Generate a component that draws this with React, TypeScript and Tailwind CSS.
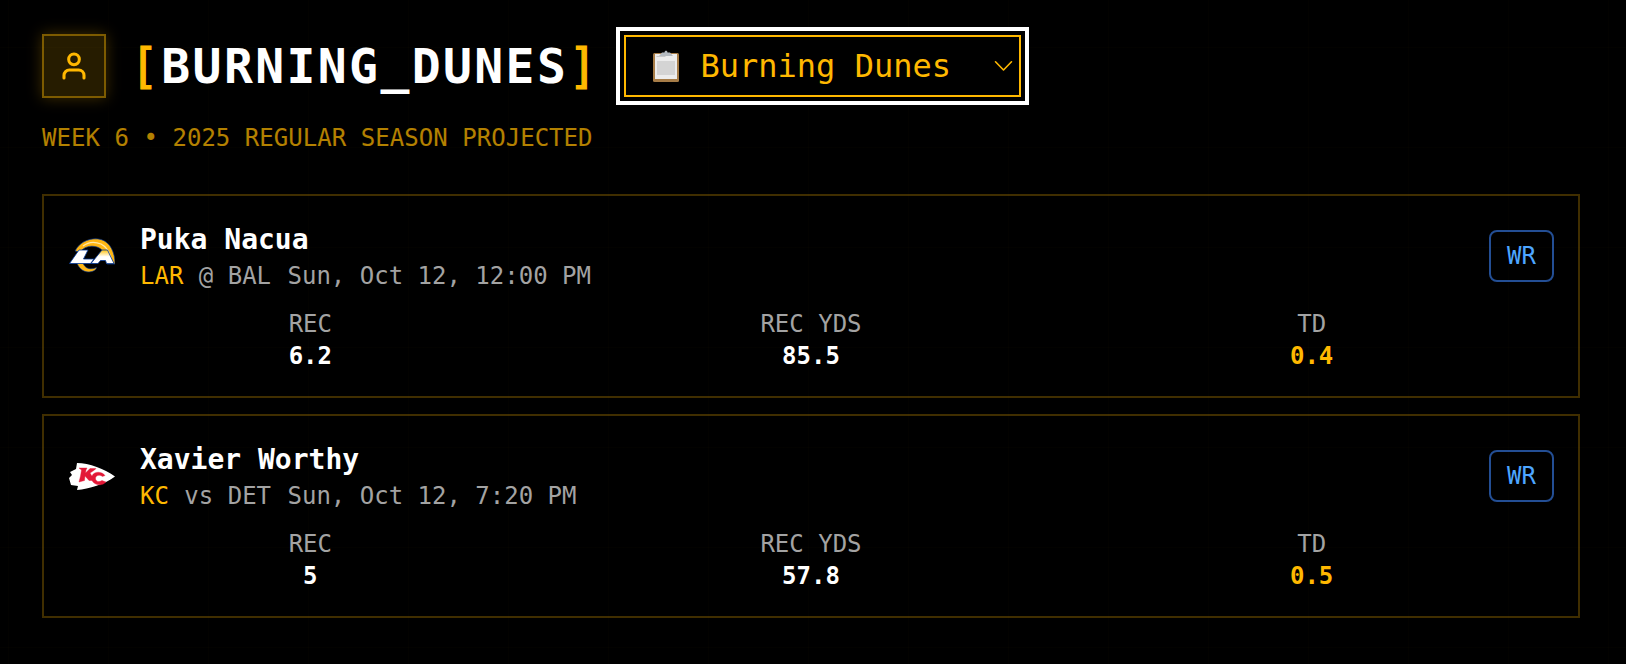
import React from "react";

function RamsLogo() {
  return (
    <svg width="46" height="35" viewBox="0 0 46 35" className="block">
      <defs>
        <linearGradient id="ramA" x1="0" y1="0" x2="0" y2="1">
          <stop offset="0" stopColor="#ffc20e" />
          <stop offset="0.5" stopColor="#ffffff" />
        </linearGradient>
      </defs>
      <path d="M6 13 C11 3 23 -1 32 1.500 C41 4 46 14 46 26 L38 26 C38 17 34 11 28 9 C21 7 15 9 11 14 Z" fill="#ffb612" stroke="#003594" strokeWidth="0.7" />
      <path d="M14 8 C19 4 26 3.500 32 6 C38 9 41 15 42.500 22" fill="none" stroke="#ffe9a8" strokeWidth="1.3" />
      <path d="M8 25 C10 31 16 35.500 23 33.500 C26 32.500 27.500 31 27.500 29.500 C22 32 16 31 14 25 Z" fill="#ffb612" stroke="#003594" strokeWidth="0.6" />
      <path d="M10 12 L19 12 L14.500 21 L25 21 L21.500 25.500 L0.500 25.500 Z" fill="#ffffff" stroke="#003594" strokeWidth="0.8" />
      <path d="M22 25.500 L33 12 L38.500 12 L45 25.500 L37.500 25.500 L36.500 22.500 L31.500 22.500 L29 25.500 Z" fill="url(#ramA)" stroke="#003594" strokeWidth="0.8" />
    </svg>
  );
}

function ChiefsLogo() {
  return (
    <svg width="46" height="27" viewBox="0 0 46 27" className="block">
      <path d="M8 0 C20 0 36 6 46 13.500 C36 21 20 26 8 27 L9 23 L2 22 L0 15 L3 12 L1 9 L7 6 Z" fill="#ffffff" />
      <path d="M10 5 L18 5 L17 7 L16.500 10 L21 5.500 L27 5.500 L25.500 7 L21 10 L24 15 L26 17.500 L20 17.500 L16 13 L15.500 17.500 L10 19 L11.500 13 L12.500 7 Z" fill="#e31837" stroke="#e31837" strokeWidth="0.4" />
      <path d="M36 12.500 C33 8.500 26 8 23.500 12 C21 16 24 22 31 21.800 C33.500 21.600 35.500 20.500 37 19 L33 17.500 C30 19.500 27 18.500 26.500 16 C26 13 30 10.800 33.500 13.500 Z" fill="#e31837" stroke="#e31837" strokeWidth="0.4" />
    </svg>
  );
}

function Clipboard() {
  return (
    <svg width="26" height="32" viewBox="0 0 26 32" className="block">
      <rect x="0" y="3" width="26" height="29" rx="1.500" fill="#a67c47" />
      <rect x="2" y="4" width="22" height="25" fill="#ececec" />
      <rect x="4" y="11" width="18" height="14" fill="#d4d4d4" />
      <rect x="3.500" y="6" width="9" height="1" fill="#c8c8c8" />
      <path d="M6 6 L9 2.500 L11.500 2.500 C11.500 0 14.500 0 14.500 2.500 L17 2.500 L20 6 Z" fill="#b4bac0" />
    </svg>
  );
}

type P = { name: string; team: string; opp: string; time: string; rec: string; yds: string; td: string; logo: React.ReactNode; logoClass: string };

const players: P[] = [
  { name: "Puka Nacua", team: "LAR", opp: "@ BAL", time: "Sun, Oct 12, 12:00 PM", rec: "6.2", yds: "85.5", td: "0.4", logo: <RamsLogo />, logoClass: "mb-[6px]" },
  { name: "Xavier Worthy", team: "KC", opp: "vs DET", time: "Sun, Oct 12, 7:20 PM", rec: "5", yds: "57.8", td: "0.5", logo: <ChiefsLogo />, logoClass: "mb-[4px]" },
];

function Stat({ label, value, gold }: { label: string; value: string; gold?: boolean }) {
  return (
    <div className="text-center">
      <div className="text-[24px] leading-[32px] text-[#a3a3a3]">{label}</div>
      <div className={`text-[24px] leading-[32px] font-bold ${gold ? "text-[#ffb800]" : "text-white"}`}>{value}</div>
    </div>
  );
}

export default function App() {
  return (
    <div className="min-h-[664px] bg-black bg-[linear-gradient(rgba(255,184,0,0.012)_1px,transparent_1px),linear-gradient(90deg,rgba(255,184,0,0.012)_1px,transparent_1px)] bg-[size:100px_100px] bg-[position:8px_47px] pl-[42px] pr-[46px] pt-[27px] font-['DejaVu_Sans_Mono',monospace]">
      <div className="flex items-center">
        <div className="flex h-[64px] w-[64px] items-center justify-center border-2 border-[#ffb800]/40 bg-[#ffb800]/15 shadow-[0_0_14px_rgba(255,184,0,0.25)]">
          <svg width="32" height="32" viewBox="0 0 24 24" fill="none" stroke="#ffb800" strokeWidth="2.3" strokeLinecap="round" strokeLinejoin="round">
            <path d="M4.500 21v-2a4 4 0 0 1 4-4h7a4 4 0 0 1 4 4v2" />
            <circle cx="12" cy="7" r="4" />
          </svg>
        </div>
        <h1 className="ml-[24px] text-[48px] leading-[60px] font-bold tracking-[2.4px] text-white">
          <span className="font-normal text-[#ffb800] [-webkit-text-stroke:1.2px_#ffb800]">[</span>BURNING_DUNES<span className="font-normal text-[#ffb800] [-webkit-text-stroke:1.2px_#ffb800]">]</span>
        </h1>
        <div className="ml-[16px] border-[4px] border-white bg-black p-[4px]">
          <div className="flex h-[62px] w-[397px] items-center border-2 border-[#ffb800] pl-[27px] text-[32px] text-[#ffb800]">
            <Clipboard />
            <span className="ml-[22px]">Burning Dunes</span>
            <svg className="ml-auto mr-[7px] overflow-visible" width="17" height="10" viewBox="0 0 17 10" fill="none" stroke="#ffb800" strokeWidth="1.6" strokeLinecap="round" strokeLinejoin="round">
              <path d="M0.500 0.800 L8.500 9 L16.500 0.800" />
            </svg>
          </div>
        </div>
      </div>
      <div className="mt-[17px] text-[24px] leading-[32px] tracking-[0.04px] text-[#ffb800]/70">WEEK 6 • 2025 REGULAR SEASON PROJECTED</div>
      <div className="mt-[40px] flex flex-col gap-[16px]">
        {players.map((p) => (
          <div key={p.name} className="border-2 border-[#ffb800]/25 px-[16px] pt-[26px] pb-[24px]">
            <div className="flex items-center">
              <div className={`ml-[9px] mr-[1px] flex w-[46px] justify-center ${p.logoClass}`}>{p.logo}</div>
              <div className="ml-[24px] flex-1">
                <div className="text-[28px] leading-[36px] font-bold text-white">{p.name}</div>
                <div className="text-[24px] leading-[36px] text-[#a3a3a3]">
                  <span className="text-[#ffb800]">{p.team}</span> <span className="ml-[1px]">{p.opp}</span> <span className="ml-[2px]">{p.time}</span>
                </div>
              </div>
              <div className="mr-[8px] mb-[4px] flex h-[52px] w-[65px] items-center justify-center rounded-[8px] border-2 border-[#3b82f6]/60 text-[24px] text-[#4da6ff]">WR</div>
            </div>
            <div className="mt-[14px] grid grid-cols-3">
              <Stat label="REC" value={p.rec} />
              <Stat label="REC YDS" value={p.yds} />
              <Stat label="TD" value={p.td} gold />
            </div>
          </div>
        ))}
      </div>
    </div>
  );
}
